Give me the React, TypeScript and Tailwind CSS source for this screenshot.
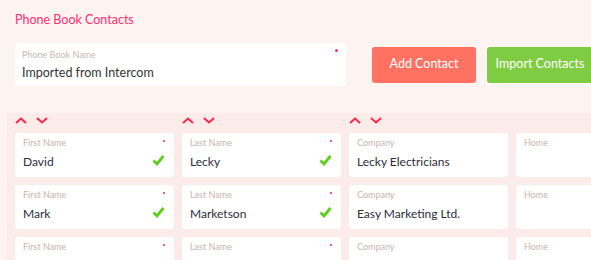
import React from 'react'

type Cell = { label: string; value: string; required?: boolean; valid?: boolean }

const rows: Cell[][] = [
    [
        { label: 'First Name', value: 'David', required: true, valid: true },
        { label: 'Last Name', value: 'Lecky', required: true, valid: true },
        { label: 'Company', value: 'Lecky Electricians' },
        { label: 'Home', value: '' },
    ],
    [
        { label: 'First Name', value: 'Mark', required: true, valid: true },
        { label: 'Last Name', value: 'Marketson', required: true, valid: true },
        { label: 'Company', value: 'Easy Marketing Ltd.' },
        { label: 'Home', value: '' },
    ],
    [
        { label: 'First Name', value: '', required: true },
        { label: 'Last Name', value: '', required: true },
        { label: 'Company', value: '' },
        { label: 'Home', value: '' },
    ],
]

function Check() {
    return (
        <svg width="13" height="12" viewBox="0 0 13 12" className="absolute right-[9px] top-[21px]">
            <path d="M1.5 6.5 L5 10 L11.5 2" fill="none" stroke="#5ccf1c" strokeWidth="2.8" strokeLinejoin="miter" />
        </svg>
    )
}

function Arrows() {
    return (
        <div className="flex gap-[9px] h-[16px] items-start">
            <svg width="12" height="7" viewBox="0 0 12 7">
                <path d="M1 6 L6 1.5 L11 6" fill="none" stroke="#ff2448" strokeWidth="2" />
            </svg>
            <svg width="12" height="7" viewBox="0 0 12 7">
                <path d="M1 1 L6 5.5 L11 1" fill="none" stroke="#ff2448" strokeWidth="2" />
            </svg>
        </div>
    )
}

function Field({ cell }: { cell: Cell }) {
    return (
        <div className="relative bg-white rounded-[3px] w-[159px] h-[44px] shrink-0 pl-[8px] pt-[4px]">
            <div className="text-[9px] leading-[12px] text-[#c9b3ae]">{cell.label}</div>
            <div className="text-[12px] leading-[18px] mt-[4px] text-[#2c2c3a]">{cell.value}</div>
            {cell.required && <div className="absolute right-[9px] top-[7px] w-[2px] h-[2px] bg-[#ff2050] rounded-full" />}
            {cell.valid && <Check />}
        </div>
    )
}

export default function App() {
    return (
        <div className="w-[591px] h-[260px] overflow-hidden bg-[#fdf4f2]" style={{ fontFamily: 'Lato, "Open Sans", sans-serif' }}>
            {/* header */}
            <div className="pl-[15px] pt-[12px] text-[12.5px] leading-[16px] text-[#ff2d6f]">Phone Book Contacts</div>

            <div className="flex items-center pl-[15px] mt-[15px] gap-[26px]">
                <div className="relative bg-white rounded-[3px] w-[331px] h-[43px] shrink-0 pl-[7px] pt-[6px]">
                    <div className="text-[9px] leading-[12px] text-[#c9b7b3]">Phone Book Name</div>
                    <div className="text-[12.5px] leading-[18px] mt-[3px] text-[#333333]">Imported from Intercom</div>
                    <div className="absolute right-[8px] top-[6px] w-[3px] h-[3px] bg-[#ff2d6f] rounded-full" />
                </div>
                <div className="flex gap-[11px] shrink-0">
                    <button className="w-[104px] h-[36px] rounded-[3px] bg-[#ff7262] text-white text-[12.5px] shrink-0">Add Contact</button>
                    <button className="w-[106px] h-[36px] rounded-[3px] bg-[#7fcc42] text-white text-[12.5px] shrink-0">Import Contacts</button>
                </div>
            </div>

            {/* contacts grid */}
            <div className="mt-[27px] ml-[7px] bg-[#fcece9] pl-[8px] pt-[4px] h-[200px]">
                <div className="flex gap-[8px]">
                    <div className="w-[159px] shrink-0"><Arrows /></div>
                    <div className="w-[159px] shrink-0"><Arrows /></div>
                    <div className="w-[159px] shrink-0"><Arrows /></div>
                </div>
                <div className="flex flex-col gap-[8px]">
                    {rows.map((row, i) => (
                        <div key={i} className="flex gap-[8px]">
                            {row.map((cell, j) => <Field key={j} cell={cell} />)}
                        </div>
                    ))}
                </div>
            </div>
        </div>
    )
}
